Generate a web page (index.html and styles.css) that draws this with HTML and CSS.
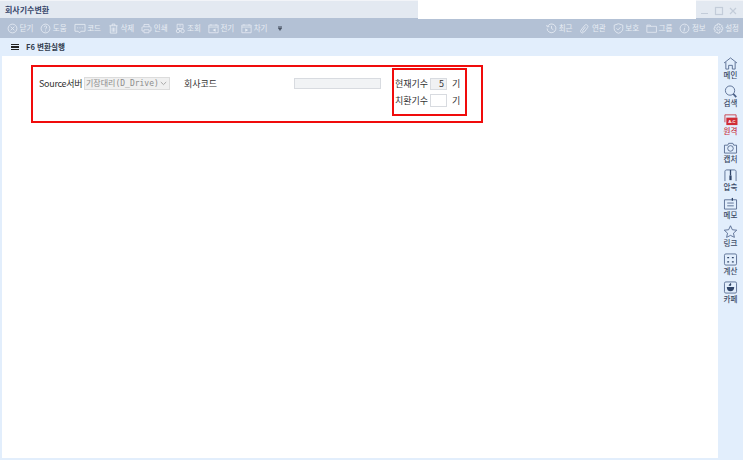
FILE: index.html
```html
<!DOCTYPE html>
<html lang="ko">
<head>
<meta charset="utf-8">
<title>회사기수변환</title>
<link rel="stylesheet" href="styles.css">
</head>
<body>
<div class="app">
  <header class="titlebar">
    <div class="title">회사기수변환</div>
    <div class="blank-tab"></div>
    <div class="winctl">
      <svg width="46" height="18" viewBox="0 0 46 18" fill="none" stroke="#c3ccd9" stroke-width="1"><path d="M5 12.5h7"/><rect x="19.5" y="6.5" width="7" height="7" stroke-width="1.2"/><path d="M34 7l6 6M40 7l-6 6" stroke-width="1.2"/></svg>
    </div>
  </header>
  <nav class="toolbar">
    <div class="tools">
      <span class="tool"><svg class="ti" viewBox="0 0 12 12"><circle cx="6" cy="6" r="4.8"/><path d="M4 4l4 4M8 4l-4 4"/></svg>닫기</span>
      <span class="tool"><svg class="ti" viewBox="0 0 12 12"><circle cx="6" cy="6" r="4.8"/><path d="M4.6 4.6c0-2 2.8-1.8 2.8-.2 0 1.200-1.400 1.200-1.400 2.600M6 8.200v1"/></svg>도움</span>
      <span class="tool"><svg class="ti wide" viewBox="0 0 13 12"><path d="M1 1.500h11v7.500H7.500L6 10.800 4.500 9H1z"/><path d="M3.500 5.300h1M6 5.300h1M8.500 5.300h1"/></svg>코드</span>
      <span class="tool"><svg class="ti" viewBox="0 0 12 12"><path d="M1.500 3h9M4.500 3V1.200h3V3M2.500 3v8h7V3M4.500 5v4.500M6 5v4.500M7.500 5v4.500"/></svg>삭제</span>
      <span class="tool"><svg class="ti" viewBox="0 0 13 12"><path d="M3.500 4V1.200h6V4M1.200 9V5c0-.7.500-1 1-1h8.600c.5 0 1 .3 1 1v4h-2M3.200 9h-2M3.500 7.500h6v3.500h-6z"/></svg>인쇄</span>
      <span class="tool"><svg class="ti" viewBox="0 0 13 12"><path d="M2.500 1h7v5h-7zM5 3h2.500"/><circle cx="3.500" cy="9" r="2"/><circle cx="9" cy="9" r="2"/><path d="M5.500 9h1.500"/></svg>조회</span>
      <span class="tool"><svg class="ti" viewBox="0 0 13 12"><path d="M1 2h11v9H1zM1 4.300h11M3.500.8v2M9.500.8v2"/><path class="solid" d="M9 6v3.800L5.500 7.900z"/></svg>전기</span>
      <span class="tool"><svg class="ti" viewBox="0 0 13 12"><path d="M1 2h11v9H1zM1 4.300h11M3.500.8v2M9.500.8v2"/><path class="solid" d="M5 6v3.800l3.500-1.900z"/></svg>차기</span>
      <svg class="more" width="4" height="5" viewBox="0 0 5 6"><path d="M0 .5h5M0 2h5L2.500 5.500z" fill="#4a5464" stroke="#4a5464" stroke-width=".7"/></svg>
    </div>
    <div class="tools right">
      <span class="tool"><svg class="ti" viewBox="0 0 12 12"><path d="M1.800 3.500A4.800 4.800 0 1 1 1.200 6M.6 2.300l1 2 2-.6M6 3.200V6l2 1.300"/></svg>최근</span>
      <span class="tool"><svg class="ti" viewBox="0 0 12 12"><path d="M4.700 10.500c-1.300 1.200-3.800-.6-2.700-2.500l4.300-5.500c1.300-1.700 4.400.2 3.200 2.300L6 9.500c-.8 1-2.500.1-2-1.200l3.200-4.200"/></svg>연관</span>
      <span class="tool"><svg class="ti" viewBox="0 0 12 12"><path d="M6 .8l4.700 1.600v3.800c0 2.700-2.600 4.300-4.700 5-2.100-.7-4.700-2.300-4.700-5V2.400zM3.800 5.800l1.700 1.700 2.800-3"/></svg>보호</span>
      <span class="tool"><svg class="ti" viewBox="0 0 13 12"><path d="M1 2h4l1 1.400h6.300V10.500H1zM1 3.400h5"/></svg>그룹</span>
      <span class="tool"><svg class="ti" viewBox="0 0 12 12"><circle cx="6" cy="6" r="4.800"/><path d="M6.600 2.800v1M6.200 5.200 5.400 9.200"/></svg>정보</span>
      <span class="tool"><svg class="ti" viewBox="0 0 12 12"><circle cx="6" cy="6" r="1.900"/><path d="M5 .9h2l.3 1.400 1.300-.6 1.400 1.400-.7 1.300 1.400.5v2l-1.400.4.700 1.300-1.400 1.400-1.300-.7L7 11.100H5l-.4-1.400-1.300.7-1.400-1.400.7-1.300L1.200 7.200v-2l1.400-.5-.7-1.300 1.400-1.400 1.300.6z"/></svg>설정</span>
    </div>
  </nav>
  <div class="subbar">
    <span class="burger"><i></i><i></i><i></i></span>
    <span class="subtitle">F6 변환실행</span>
  </div>
  <div class="body">
    <main class="content">
      <div class="form">
        <div class="row">
          <label class="lbl-src">Source서버</label>
          <span class="select">기장대리(D_Drive)<svg width="7" height="5" viewBox="0 0 7 5" fill="none" stroke="#a8a8a8"><path d="M.8 1l2.700 2.600L6.200 1"/></svg></span>
          <label class="lbl-code">회사코드</label>
          <span class="field code"></span>
          <div class="periods">
            <div class="prow"><label>현재기수</label><span class="field num">5</span><span>기</span></div>
            <div class="prow"><label>치환기수</label><span class="field blank"></span><span>기</span></div>
          </div>
        </div>
      </div>
      <div class="mark outer"></div>
      <div class="mark inner"></div>
    </main>
    <aside class="side">
      <div class="sitem"><svg viewBox="0 0 16 14"><path d="M1 6.500L8 1l7 5.500M3 5.500V13h3V9h4v4h3V5.500"/></svg>메인</div>
      <div class="sitem"><svg viewBox="0 0 16 14"><circle cx="7.500" cy="6" r="5"/><path d="M11 9.500l3.200 3.500" stroke-width="1.800"/></svg>검색</div>
      <div class="sitem red"><svg viewBox="0 0 16 14"><path class="rl" d="M2 10V2h12v3"/><rect class="rf" x="3.500" y="5" width="12" height="8"/><text x="9.500" y="11" class="ac">A-C</text></svg>원격</div>
      <div class="sitem"><svg viewBox="0 0 16 14"><path d="M1.500 13V4.500h3.500l1-2h4.500l1 2h3V13z"/><circle cx="8" cy="8" r="3"/></svg>캡처</div>
      <div class="sitem"><svg viewBox="0 0 16 14"><path d="M2 13V2.500C2 1.500 3 1 4 1h8c1 0 2 .5 2 1.500V13"/><path class="thick" d="M8 1v6"/><rect class="navy" x="6.800" y="7" width="2.400" height="5"/></svg>압축</div>
      <div class="sitem"><svg viewBox="0 0 16 14"><path d="M1.500 3h13v10h-13zM4.500 6.500h7M4.500 9.500h7"/><path class="thick" d="M10 1v3"/></svg>메모</div>
      <div class="sitem"><svg viewBox="0 0 16 14"><path d="M8 .8l2 4.300 4.700.5-3.500 3.200 1 4.500L8 11.200l-4.200 2.100 1-4.500L1.300 5.600 6 5.100z"/></svg>링크</div>
      <div class="sitem"><svg viewBox="0 0 16 14"><rect x="1.500" y="1" width="13" height="12" rx="1.500"/><path class="thick" d="M4.500 5h2M9.500 5h2M4.500 9.500h2M9.500 9.500h2"/></svg>계산</div>
      <div class="sitem"><svg viewBox="0 0 16 14"><rect x="1.500" y="1" width="13" height="12" rx="1.500"/><path class="navy" d="M4 6.500h8c0 3-1.500 4.500-4 4.500S4 9.500 4 6.500zM6 5c0-1.500 2-1.500 2-3 1 1 1 2 .5 3z"/></svg>카페</div>
    </aside>
  </div>
</div>
</body>
</html>
```

FILE: styles.css
```css
* { box-sizing: border-box; }
html, body { margin: 0; padding: 0; }
body {
  width: 743px;
  height: 460px;
  overflow: hidden;
  background: #e2eefc;
  font-family: "Noto Sans CJK KR", "Liberation Sans", sans-serif;
  color: #333;
}
.app { display: flex; flex-direction: column; height: 460px; }

.titlebar {
  height: 18px;
  flex: none;
  display: flex;
  background: #e3e9f1;
  border-top: 1px solid #f2f4f8;
  position: relative;
}
.title {
  width: 418px;
  padding-left: 5px;
  font-size: 8px;
  line-height: 17px;
  font-weight: 700;
  color: #37476b;
}
.blank-tab {
  width: 278px;
  height: 19px;
  margin-top: -1px;
  background: #fff;
  position: relative;
  z-index: 2;
}
.winctl { width: 47px; display: flex; }

.toolbar {
  height: 20px;
  flex: none;
  background: #b3c1d5;
  display: flex;
  justify-content: space-between;
  align-items: center;
  padding: 0 4px 0 7px;
}
.tools { display: flex; align-items: center; gap: 7px; }
.tool {
  display: flex;
  align-items: center;
  gap: 1.500px;
  font-size: 7.500px;
  line-height: 12px;
  color: #e8edf4;
  white-space: nowrap;
}
.ti {
  width: 11px;
  height: 11px;
  fill: none;
  stroke: #e8edf4;
  stroke-width: .9;
  flex: none;
}
.ti.wide { width: 12px; }
.ti .solid { fill: #e8edf4; stroke: none; }
.more { margin-left: 3px; }

.subbar {
  height: 18px;
  flex: none;
  display: flex;
  align-items: center;
  padding-left: 11px;
}
.burger { display: flex; flex-direction: column; gap: 1px; width: 8px; margin-right: 7px; }
.burger i { display: block; height: 1.500px; background: #222; }
.subtitle { font-size: 7.600px; line-height: 12px; font-weight: 700; color: #303b4c; }

.body { flex: 1; display: flex; min-height: 0; padding: 0 0 2px 2px; }
.content {
  width: 716px;
  background: #fff;
  position: relative;
}
.form { padding: 21px 0 0 37px; font-size: 9px; line-height: 13px; color: #333; }
.row { display: flex; align-items: flex-start; }
.lbl-src { width: 45px; white-space: nowrap; letter-spacing: -.3px; }
.select {
  width: 86px;
  height: 13px;
  background: #f0f0f0;
  border: 1px solid #dcdcdc;
  color: #8c8c8c;
  font-family: "DejaVu Sans Mono", "Noto Sans CJK KR", monospace;
  font-size: 8px;
  line-height: 11px;
  padding-left: 1px;
  display: flex;
  justify-content: space-between;
  align-items: center;
  white-space: nowrap;
}
.select svg { margin-right: 2px; flex: none; }
.lbl-code { margin-left: 14px; width: 110px; }
.field { display: block; border: 1px solid #d8dbe0; }
.code { width: 87px; height: 11px; margin-top: 1px; background: #f1f3f5; }
.periods { margin-left: 14px; display: flex; flex-direction: column; gap: 4px; }
.prow { display: flex; align-items: center; height: 13px; gap: 5px; }
.prow label { width: 30px; white-space: nowrap; }
.num {
  width: 17px;
  height: 12px;
  background: #f0f1f3;
  text-align: right;
  padding-right: 2px;
  line-height: 10px;
}
.blank { width: 17px; height: 13px; background: #fff; }

.mark { position: absolute; border: 2px solid #f00c0c; pointer-events: none; }
.outer { left: 29px; top: 9px; width: 452px; height: 58px; }
.inner { left: 390px; top: 12px; width: 75px; height: 48px; }

.side {
  width: 25px;
  display: flex;
  flex-direction: column;
  align-items: center;
  gap: 2px;
}
.sitem {
  height: 26px;
  display: flex;
  flex-direction: column;
  align-items: center;
  font-size: 7.500px;
  line-height: 10px;
  color: #3b4a66;
  font-weight: 500;
}
.sitem svg {
  width: 15px;
  height: 13px;
  margin-top: 1px;
  flex: none;
  fill: none;
  stroke: #4a6088;
  stroke-width: .9;
}
.sitem svg .thick { stroke: #2f4468; stroke-width: 1.400; }
.sitem svg .navy { fill: #2f4468; stroke: none; }
.sitem.red { color: #c8303c; }
.sitem svg .rl { stroke: #c8303c; }
.sitem svg .rf { fill: #d02c36; stroke: none; }
.sitem svg .ac { fill: #fff; stroke: none; font-size: 4.500px; font-weight: 700; text-anchor: middle; font-family: "Liberation Sans", sans-serif; }
```
